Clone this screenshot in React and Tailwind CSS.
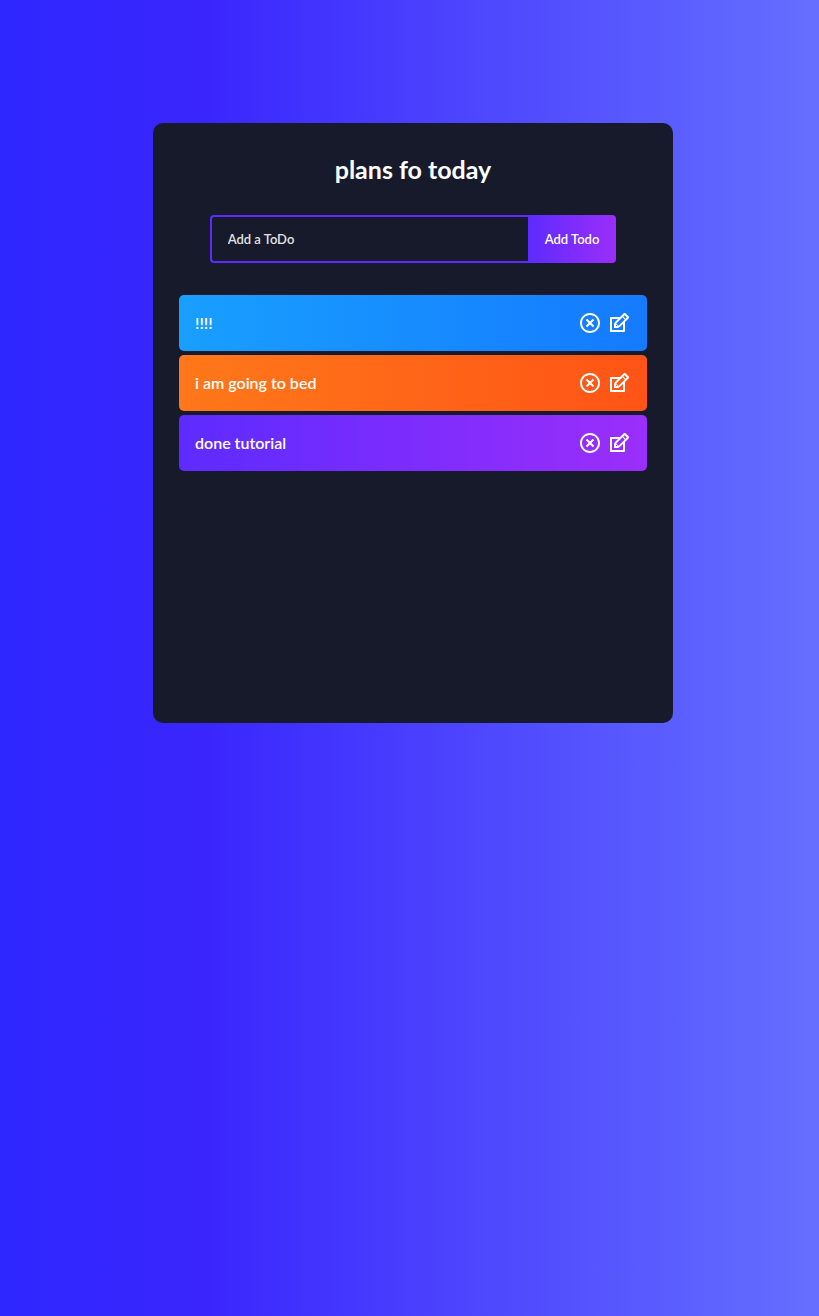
import { RiCloseCircleLine } from "react-icons/ri";
import { TiEdit } from "react-icons/ti";

const todos = [
  { id: 1, text: "!!!!", tone: "bg-[linear-gradient(90deg,#189fff_0%,#157aff_100%)]" },
  { id: 2, text: "i am going to bed", tone: "bg-[linear-gradient(90deg,#ff781a_0%,#ff5416_100%)]" },
  { id: 3, text: "done tutorial", tone: "bg-[linear-gradient(90deg,#5d2bff_0%,#9b2efa_100%)]" },
];

function TodoForm() {
  return (
    <form className="mt-8 mb-8 flex justify-center" onSubmit={(e) => e.preventDefault()}>
      <input
        type="text"
        aria-label="Add a ToDo"
        placeholder="Add a ToDo"
        className="h-12 w-[318px] min-w-0 rounded-l border-2 border-r-0 border-[#5d2bff] bg-transparent px-4 text-[13px] font-semibold text-white outline-none placeholder:text-[#e2e2e2]"
      />
      <button
        type="submit"
        className="h-12 cursor-pointer rounded-r bg-[linear-gradient(90deg,#5d2bff_0%,#9b2efa_100%)] px-[17px] text-[13px] leading-5 font-semibold whitespace-nowrap text-white"
      >
        Add Todo
      </button>
    </form>
  );
}

function TodoItem({ text, tone }) {
  return (
    <li className={`flex h-14 items-center justify-between rounded-[5px] px-4 font-semibold text-white ${tone}`}>
      <span>{text}</span>
      <span className="flex items-center gap-[5px]">
        <button type="button" aria-label={`Delete ${text}`} className="cursor-pointer">
          <RiCloseCircleLine size={24} />
        </button>
        <button type="button" aria-label={`Edit ${text}`} className="cursor-pointer">
          <TiEdit size={24} />
        </button>
      </span>
    </li>
  );
}

export default function App() {
  return (
    <div className="min-h-screen bg-[linear-gradient(90deg,#2e27ff_0%,#3a26fd_25%,#656fff_100%)] pt-[123px] pl-[7px] font-['Trebuchet_MS','Lato',sans-serif]">
      <main className="mx-auto min-h-[600px] w-full max-w-[520px] rounded-[10px] bg-[#161a2b] px-[26px] pt-8 pb-8 text-center">
        <h1 className="text-[25px] leading-7 font-bold text-white">plans fo today</h1>
        <TodoForm />
        <ul className="flex flex-col gap-1 text-left">
          {todos.map((todo) => (
            <TodoItem key={todo.id} text={todo.text} tone={todo.tone} />
          ))}
        </ul>
      </main>
    </div>
  );
}
